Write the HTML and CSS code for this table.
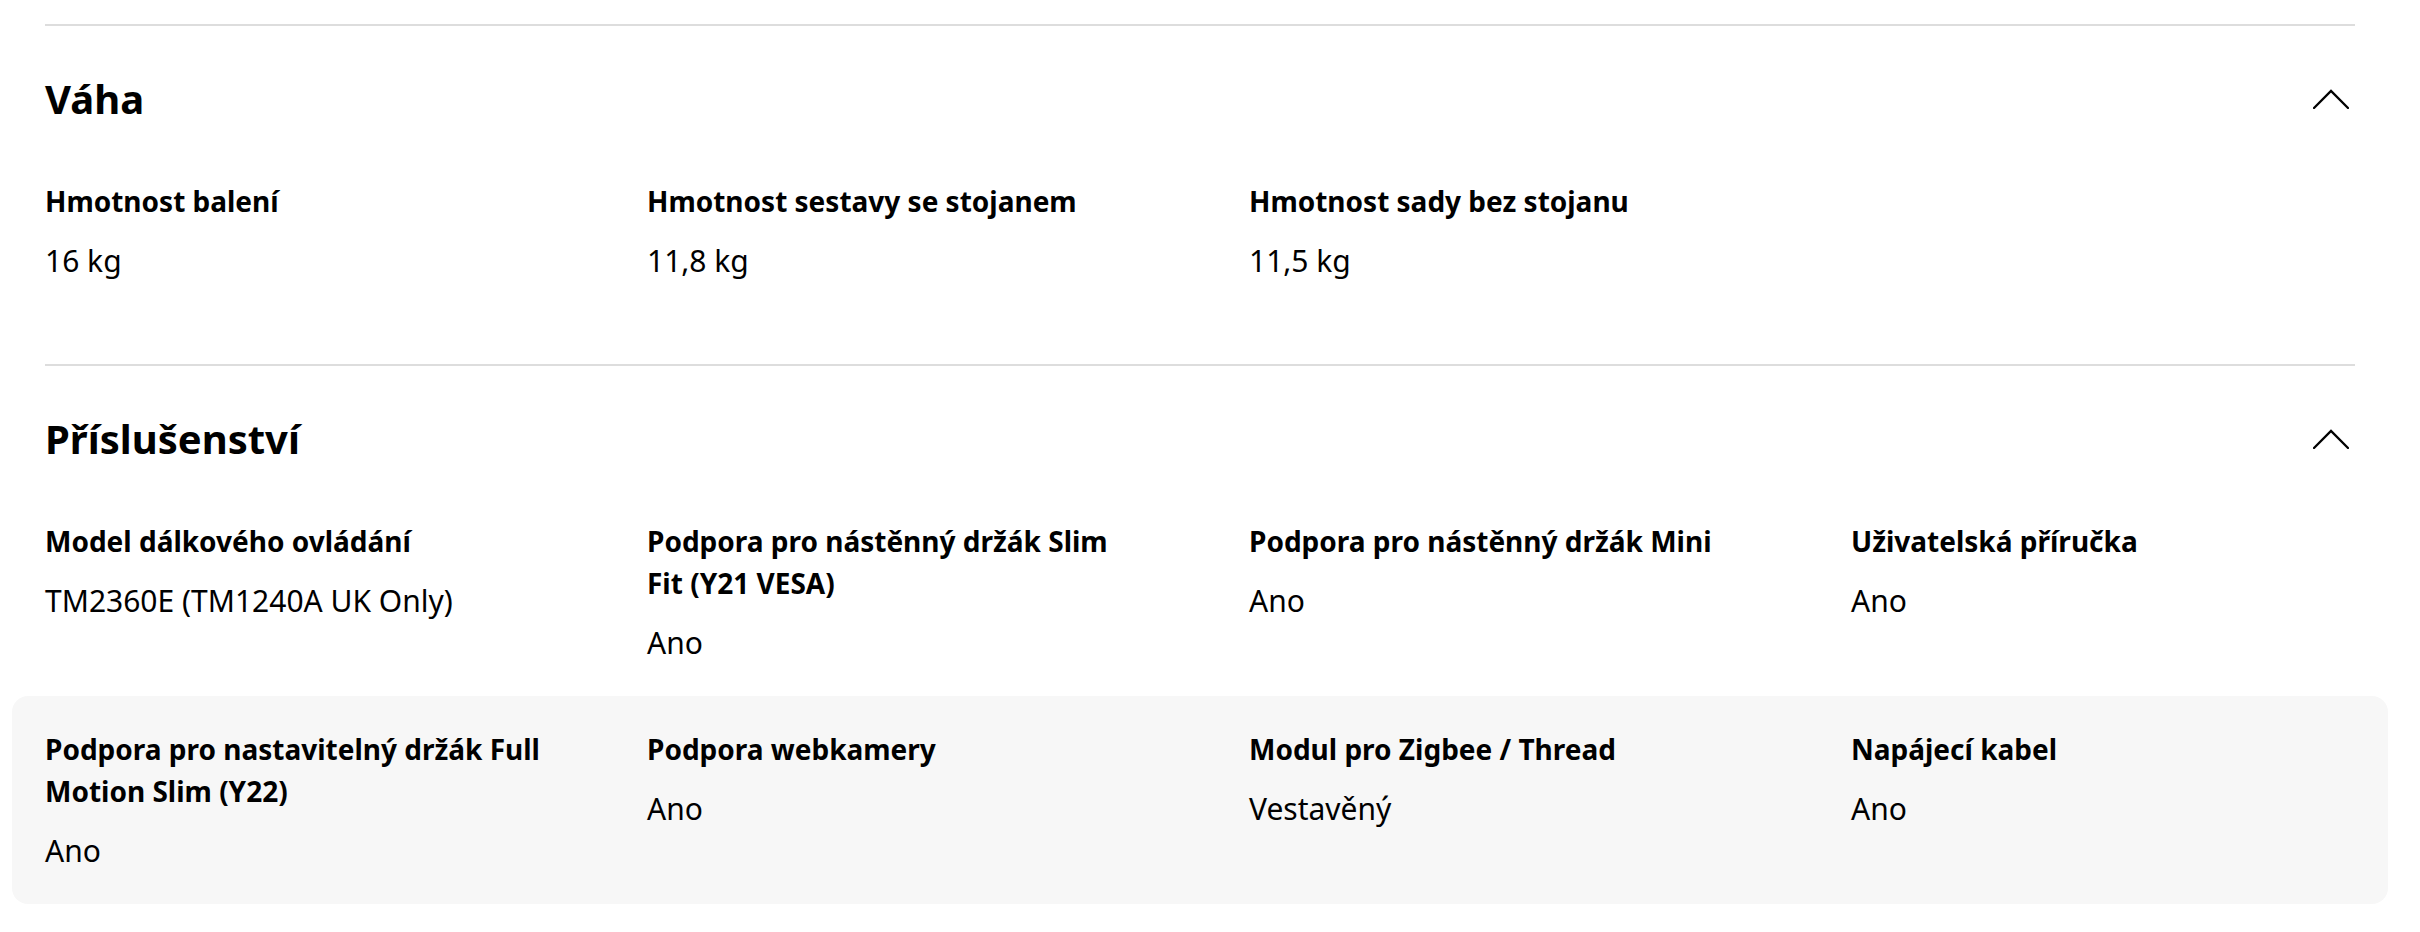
FILE: index.html
```html
<!DOCTYPE html>
<html lang="cs">
<head>
<meta charset="utf-8">
<title>Specifikace</title>
<link rel="stylesheet" href="styles.css">
</head>
<body>
<main class="specs">
  <section class="spec-section">
    <div class="spec-head">
      <h2 class="spec-title">Váha</h2>
      <button class="toggle" aria-label="Sbalit">
        <svg width="36" height="20" viewBox="0 0 36 20"><polyline points="1,19 18,2 35,19" fill="none" stroke="#000" stroke-width="2.3" stroke-linecap="round" stroke-linejoin="miter"/></svg>
      </button>
    </div>
    <div class="spec-row">
      <div class="item"><p class="label">Hmotnost balení</p><p class="value">16 kg</p></div>
      <div class="item"><p class="label">Hmotnost sestavy se stojanem</p><p class="value">11,8 kg</p></div>
      <div class="item"><p class="label">Hmotnost sady bez stojanu</p><p class="value">11,5 kg</p></div>
    </div>
  </section>
  <section class="spec-section">
    <div class="spec-head">
      <h2 class="spec-title">Příslušenství</h2>
      <button class="toggle" aria-label="Sbalit">
        <svg width="36" height="20" viewBox="0 0 36 20"><polyline points="1,19 18,2 35,19" fill="none" stroke="#000" stroke-width="2.3" stroke-linecap="round" stroke-linejoin="miter"/></svg>
      </button>
    </div>
    <div class="spec-row">
      <div class="item"><p class="label">Model dálkového ovládání</p><p class="value">TM2360E (TM1240A UK Only)</p></div>
      <div class="item"><p class="label">Podpora pro nástěnný držák Slim Fit (Y21 VESA)</p><p class="value">Ano</p></div>
      <div class="item"><p class="label">Podpora pro nástěnný držák Mini</p><p class="value">Ano</p></div>
      <div class="item"><p class="label">Uživatelská příručka</p><p class="value">Ano</p></div>
    </div>
    <div class="spec-row highlighted">
      <div class="item"><p class="label">Podpora pro nastavitelný držák Full Motion Slim (Y22)</p><p class="value">Ano</p></div>
      <div class="item"><p class="label">Podpora webkamery</p><p class="value">Ano</p></div>
      <div class="item"><p class="label">Modul pro Zigbee / Thread</p><p class="value">Vestavěný</p></div>
      <div class="item"><p class="label">Napájecí kabel</p><p class="value">Ano</p></div>
    </div>
  </section>
</main>
</body>
</html>
```
FILE: styles.css
```css
html, body {
  margin: 0;
  padding: 0;
  background: #fff;
}
body {
  font-family: "Noto Sans", "Open Sans", sans-serif;
  color: #000;
  padding-top: 24px;
}
.specs {
  margin-left: 12px;
  width: 2376px;
}
.spec-section {
  margin-bottom: 50px;
}
.spec-head {
  margin: 0 33px;
  border-top: 2px solid #dddddd;
  padding-top: 45px;
  padding-bottom: 21px;
  display: flex;
  align-items: center;
  justify-content: space-between;
}
.spec-title {
  margin: 0;
  font-size: 40px;
  line-height: 56px;
  font-weight: 700;
}
.toggle {
  background: none;
  border: 0;
  padding: 0;
  margin-right: 6px;
  display: flex;
  align-items: center;
  height: 20px;
}
.spec-row {
  padding: 32px 33px;
  display: grid;
  grid-template-columns: repeat(4, 499px);
  column-gap: 103px;
  border-radius: 16px;
}
.spec-row.highlighted {
  background: #f7f7f7;
}
.label {
  margin: 0;
  font-size: 28px;
  line-height: 42px;
  font-weight: 700;
}
.value {
  margin: 18px 0 0;
  font-size: 30px;
  line-height: 42px;
  font-weight: 400;
}
```
